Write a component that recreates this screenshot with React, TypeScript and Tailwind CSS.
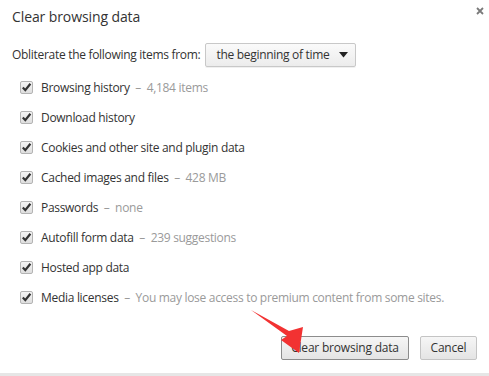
import React from 'react';

const items: { label: string; note?: string }[] = [
    { label: 'Browsing history', note: '4,184 items' },
    { label: 'Download history' },
    { label: 'Cookies and other site and plugin data' },
    { label: 'Cached images and files', note: '428 MB' },
    { label: 'Passwords', note: 'none' },
    { label: 'Autofill form data', note: '239 suggestions' },
    { label: 'Hosted app data' },
    { label: 'Media licenses', note: 'You may lose access to premium content from some sites.' },
];

const CheckBox = () => (
    <div className="w-[13px] h-[13px] shrink-0 rounded-[2px] border border-[#b4b4b4] bg-gradient-to-b from-[#f4f4f4] to-[#dedede] flex items-center justify-center">
        <svg width="11" height="11" viewBox="0 0 11 11">
            <path d="M1.8 5.6 L4.3 8.2 L9.4 1.8" fill="none" stroke="#333" strokeWidth="2.2" />
        </svg>
    </div>
);

export default function App() {
    return (
        <div className="relative w-[489px] h-[376px] bg-white flex flex-col font-['Open_Sans',sans-serif] text-[#333]">
            {/* Header */}
            <div className="flex justify-between items-start pl-3 pr-[5px] pt-[7px]">
                <h1 className="text-[14px] leading-[20px] font-normal text-[#333] tracking-[-0.1px]">Clear browsing data</h1>
                <svg width="8" height="8" viewBox="0 0 8 8" className="mt-0">
                    <path d="M1 1 L7 7 M7 1 L1 7" stroke="#7a7a7a" strokeWidth="1.8" />
                </svg>
            </div>

            {/* Time range */}
            <div className="flex items-center pl-3 mt-[16px] text-[12px] tracking-[-0.3px]">
                <span>Obliterate the following items from:</span>
                <div className="ml-[5px] w-[151px] h-[24px] rounded-[2px] border border-[#c8c8c8] bg-gradient-to-b from-[#fafafa] to-[#ececec] shadow-[0_1px_0_rgba(0,0,0,0.06)] flex items-center justify-between pl-[10px] pr-[7px]">
                    <span>the beginning of time</span>
                    <svg width="9" height="6" viewBox="0 0 9 6">
                        <path d="M0 0 H9 L4.5 5.5 Z" fill="#222" />
                    </svg>
                </div>
            </div>

            {/* Checklist */}
            <div className="flex flex-col pl-5 mt-[14px] gap-[17px] text-[12px] tracking-[-0.3px]">
                {items.map((it) => (
                    <div key={it.label} className="flex items-center h-[13px] gap-[8px]">
                        <CheckBox />
                        <span className="whitespace-pre">
                            {it.label}
                            {it.note && <span className="text-[#9a9a9a]">{'  \u2013  '}{it.note}</span>}
                        </span>
                    </div>
                ))}
            </div>

            {/* Buttons */}
            <div className="flex justify-end gap-[11px] pr-[12px] mt-auto mb-[13px] text-[12px] tracking-[-0.2px]">
                <button className="w-[128px] h-[24px] rounded-[2px] border border-[#8c8c8c] bg-gradient-to-b from-[#f6f6f6] to-[#e4e4e4] text-[#333]">
                    Clear browsing data
                </button>
                <button className="w-[57px] h-[24px] rounded-[2px] border border-[#c4c4c4] bg-gradient-to-b from-[#f6f6f6] to-[#e4e4e4] text-[#333]">
                    Cancel
                </button>
            </div>
            <div className="h-[3px] bg-[#e6e6e6]" />

            {/* Annotation arrow */}
            <svg className="absolute left-0 top-0 pointer-events-none" width="489" height="376">
                <polygon points="251,310 289,331 303,327 299,353 281,340 287,336" fill="#f23232" />
            </svg>
        </div>
    );
}
